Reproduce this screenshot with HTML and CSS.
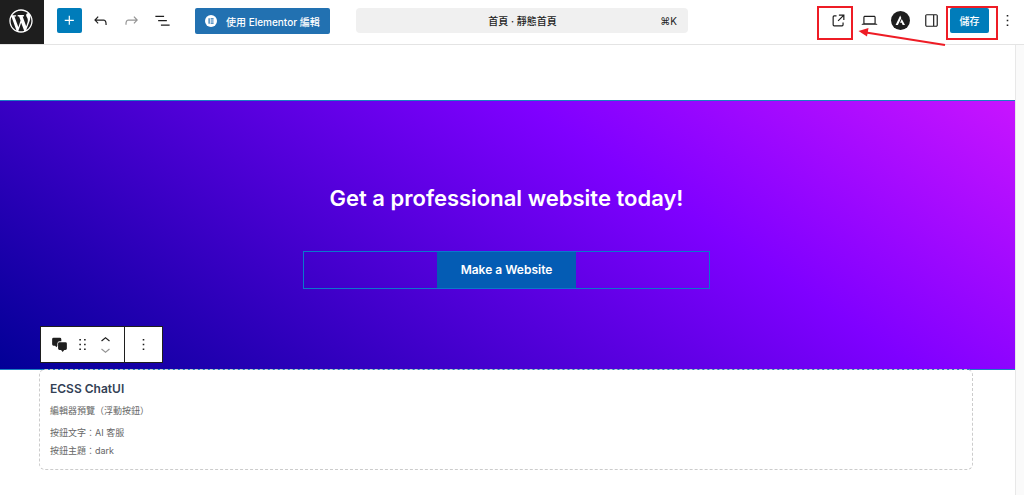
FILE: index.html
```html
<!DOCTYPE html>
<html lang="zh-Hant">
<head>
  <meta charset="utf-8">
  <title>首頁 · 靜態首頁</title>
  <link rel="stylesheet" href="styles.css">
</head>
<body>
  <header class="editor-header">
    <a class="wp-logo" href="#" aria-label="WordPress">
      <svg viewBox="-2 -2 24 24"><path d="M20 10c0-5.51-4.49-10-10-10C4.48 0 0 4.49 0 10c0 5.52 4.48 10 10 10 5.51 0 10-4.48 10-10zM7.78 15.37L4.37 6.22c.55-.02 1.17-.08 1.17-.08.5-.06.44-1.13-.06-1.11 0 0-1.45.11-2.37.11-.18 0-.37 0-.58-.01C4.12 2.69 6.87 1.11 10 1.11c2.33 0 4.45.87 6.05 2.34-.68-.11-1.65.39-1.65 1.58 0 .74.45 1.36.9 2.1.35.61.55 1.36.55 2.46 0 1.49-1.4 5-1.4 5l-3.03-8.37c.54-.02.82-.17.82-.17.5-.05.44-1.25-.06-1.22 0 0-1.44.12-2.38.12-.87 0-2.33-.12-2.33-.12-.5-.03-.56 1.2-.06 1.22l.92.08 1.26 3.41zM17.41 10c.24-.64.74-1.87.43-4.25.7 1.29 1.05 2.71 1.05 4.25 0 3.29-1.73 6.24-4.4 7.78.97-2.59 1.94-5.2 2.92-7.78zM6.1 18.09C3.12 16.65 1.11 13.53 1.11 10c0-1.3.23-2.48.72-3.59C3.25 10.3 4.67 14.2 6.1 18.09zm4.03-6.63l2.58 6.98c-.86.29-1.76.45-2.71.45-.79 0-1.57-.11-2.29-.33.81-2.38 1.62-4.74 2.42-7.1z"/></svg>
    </a>

    <div class="tools">
      <button class="icon-button primary" aria-label="Add block">
        <svg viewBox="0 0 24 24"><path d="M11 12.5V17.5H12.5V12.5H17.5V11H12.5V6H11V11H6V12.5H11Z"/></svg>
      </button>
      <button class="icon-button" aria-label="Undo">
        <svg viewBox="0 0 24 24"><path d="M18.3 11.7c-.6-.6-1.4-.9-2.3-.9H6.7l2.9-3.3-1.1-1-4.5 5L8.5 16l1-1-2.7-2.7H16c.5 0 .9.2 1.3.5 1 1 1 3.4 1 4.5v.3h1.5v-.2c0-1.5 0-4.3-1.5-5.7z"/></svg>
      </button>
      <button class="icon-button" aria-label="Redo" disabled>
        <svg viewBox="0 0 24 24"><path d="M15.6 6.5l-1.1 1 2.9 3.3H8c-.9 0-1.7.3-2.3.9-1.4 1.5-1.4 4.2-1.4 5.6v.2h1.5v-.3c0-1.1 0-3.5 1-4.5.3-.3.7-.5 1.3-.5h9.2L14.5 15l1.1 1.1 4.6-4.6-4.6-5z"/></svg>
      </button>
      <button class="icon-button" aria-label="Document overview">
        <svg viewBox="0 0 24 24"><path d="M3 6h11v1.5H3V6Zm3.5 5.5h11V13h-11v-1.5ZM21 17H10v1.5h11V17Z"/></svg>
      </button>
    </div>

    <button class="elementor-button">
      <svg viewBox="0 0 12 12"><circle cx="6" cy="6" r="6" fill="#fff"/><path d="M3.5 3.3h1.2v5.4H3.5zM5.6 3.3h3v1.1h-3zM5.6 5.4h3v1.1h-3zM5.6 7.6h3v1.1h-3z" fill="#2271b1"/></svg>
      使用 Elementor 編輯
    </button>

    <div class="document-area">
      <button class="document-bar">
        <span class="document-title">首頁 · 靜態首頁</span>
        <span class="shortcut">⌘K</span>
      </button>
    </div>

    <div class="settings">
      <a class="icon-button" href="#" aria-label="View page">
        <svg viewBox="0 0 24 24"><path d="M19.5 4.5h-7V6h4.44l-5.97 5.97 1.06 1.06L18 7.06v4.44h1.5v-7Zm-13 1a2 2 0 0 0-2 2v10a2 2 0 0 0 2 2h10a2 2 0 0 0 2-2v-3H17v3a.5.5 0 0 1-.5.5h-10a.5.5 0 0 1-.5-.5v-10a.5.5 0 0 1 .5-.5h3V5.5h-3Z"/></svg>
      </a>
      <button class="icon-button" aria-label="Preview">
        <svg viewBox="0 0 24 24"><path d="M20.5 16h-.7V8c0-1.1-.9-2-2-2H6.2c-1.1 0-2 .9-2 2v8h-.7c-.8 0-1.5.7-1.5 1.5h20c0-.8-.7-1.5-1.5-1.5zM5.7 8c0-.3.2-.5.5-.5h11.6c.3 0 .5.2.5.5v7.6H5.7V8z"/></svg>
      </button>
      <button class="icon-button" aria-label="Astra settings">
        <svg viewBox="0 0 24 24"><circle cx="12" cy="12" r="12"/><path d="M11.6 5.6 5.8 17.6h2.9l4.3-8.9zM13.6 10.2l-2.2 4.6h2.2l1.1 2.8h3z" fill="#fff"/></svg>
      </button>
      <button class="icon-button" aria-label="Settings">
        <svg viewBox="0 0 24 24"><path d="M18 4H6c-1.1 0-2 .9-2 2v12c0 1.1.9 2 2 2h12c1.1 0 2-.9 2-2V6c0-1.1-.9-2-2-2zm-4 14.5H6c-.3 0-.5-.2-.5-.5V6c0-.3.2-.5.5-.5h8v13zm4.5-.5c0 .3-.2.5-.5.5h-2.5v-13H18c.3 0 .5.2.5.5v12z"/></svg>
      </button>
      <button class="save-button">儲存</button>
      <button class="icon-button" aria-label="Options">
        <svg viewBox="0 0 24 24"><path d="M13 19h-2v-2h2v2zm0-6h-2v-2h2v2zm0-6h-2V5h2v2z"/></svg>
      </button>
    </div>

    <!-- Highlights: save first, then open the page -->
    <svg class="callout" viewBox="0 0 224 60">
      <path d="M18 7h34v32H18zM147 7h50v32h-50z" fill="none" stroke="#ee1c25" stroke-width="2"/>
      <path d="M145 45 66 32.5" stroke="#ee1c25" stroke-width="2"/>
      <path d="M58.5 31 68.500 28l-1.500 8.500z" fill="#ee1c25"/>
    </svg>
  </header>

  <main class="canvas">
    <section class="cover">
      <h2>Get a professional website today!</h2>
      <div class="cover-buttons">
        <a class="cover-button" href="#">Make a Website</a>
      </div>

      <div class="block-toolbar">
        <div class="toolbar-group">
          <button aria-label="ECSS ChatUI">
            <svg viewBox="0 0 24 24"><path d="M4.5 3.5h8a1.8 1.8 0 0 1 1.8 1.8V8h-2a3 3 0 0 0-3 3v3L8 15.5 6.5 13.500h-2a1.8 1.8 0 0 1-1.8-1.8V5.3a1.8 1.8 0 0 1 1.8-1.8z"/><path d="M12 9h7.5a1.8 1.8 0 0 1 1.8 1.8v6.4a1.8 1.8 0 0 1-1.8 1.8H18l-2 2.5-2-2.5h-2a1.8 1.8 0 0 1-1.8-1.8v-6.4A1.8 1.8 0 0 1 12 9z"/></svg>
          </button>
          <button aria-label="Drag">
            <svg viewBox="0 0 24 24"><path d="M8 7h2V5H8v2zm0 6h2v-2H8v2zm0 6h2v-2H8v2zm6-14v2h2V5h-2zm0 8h2v-2h-2v2zm0 6h2v-2h-2v2z"/></svg>
          </button>
          <div class="movers">
            <button aria-label="Move up">
              <svg viewBox="0 3 24 15"><path d="M6.5 12.4L12 8l5.5 4.4-.9 1.2L12 10l-4.5 3.6-1-1.2z"/></svg>
            </button>
            <button aria-label="Move down" disabled>
              <svg viewBox="0 6 24 15"><path d="M17.5 11.6L12 16l-5.5-4.4.9-1.2L12 14l4.5-3.6 1 1.2z"/></svg>
            </button>
          </div>
        </div>
        <div class="toolbar-group">
          <button aria-label="Options">
            <svg viewBox="0 0 24 24"><path d="M13 19h-2v-2h2v2zm0-6h-2v-2h2v2zm0-6h-2V5h2v2z"/></svg>
          </button>
        </div>
      </div>
    </section>

    <section class="chat-preview">
      <h3>ECSS ChatUI</h3>
      <p class="preview-note">編輯器預覽（浮動按鈕）</p>
      <p>按鈕文字：AI 客服</p>
      <p>按鈕主題：dark</p>
    </section>
  </main>
</body>
</html>
```
FILE: styles.css
```css
* {
  box-sizing: border-box;
}
html, body {
  height: 100%;
  margin: 0;
}
body {
  display: flex;
  flex-direction: column;
  background-color: #fff;
  color: #1e1e1e;
  font-family: Inter, "Noto Sans CJK TC", sans-serif;
  font-size: 10px;
  overflow: hidden;
}
button {
  margin: 0;
  padding: 0;
  border: 0;
  background: none;
  color: inherit;
  font: inherit;
}
a {
  color: inherit;
  text-decoration: none;
}
svg {
  display: block;
  fill: currentColor;
}

/* Header */
.editor-header {
  position: relative;
  display: flex;
  align-items: flex-start;
  padding-right: 4px;
  border-bottom: 1px solid #e4e4e4;
}
.wp-logo {
  display: flex;
  align-items: center;
  justify-content: center;
  width: 44px;
  height: 44px;
  padding: 0 2px 2px 0;
  background-color: #1e1e1e;
  color: #fff;
}
.wp-logo svg {
  width: 28px;
  height: 28px;
}
.tools, .settings {
  display: flex;
  gap: 6px;
  padding-top: 8px;
}
.tools {
  padding-left: 13px;
}
.icon-button {
  display: flex;
  align-items: center;
  justify-content: center;
  width: 25px;
  height: 25px;
  border-radius: 2px;
}
.icon-button svg {
  width: 19px;
  height: 19px;
}
.icon-button:disabled {
  color: #949494;
}
.primary, .save-button {
  background-color: #007cba;
  color: #fff;
}
.elementor-button {
  display: flex;
  align-items: center;
  gap: 9px;
  height: 26px;
  margin: 8px 0 0 20px;
  padding: 0 10px;
  border-radius: 2px;
  background-color: #2271b1;
  color: #fff;
  font-weight: 500;
  white-space: nowrap;
}
.elementor-button svg {
  width: 12px;
  height: 12px;
}
.document-area {
  flex: 1;
  padding: 8px 138px 0 26px;
}
.document-bar {
  display: flex;
  align-items: center;
  width: 100%;
  height: 25px;
  padding: 0 11px;
  border-radius: 4px;
  background-color: #f0f0f0;
}
.document-title {
  flex: 1;
  padding-left: 18px;
  font-weight: 500;
}
.save-button {
  width: 39px;
  height: 25px;
  border-radius: 2px;
  font-weight: 500;
}
.callout {
  position: absolute;
  top: 0;
  right: 0;
  width: 224px;
  height: 60px;
  z-index: 2;
  pointer-events: none;
}

/* Canvas */
.canvas {
  flex: 1;
  margin-right: 8px;
  padding-top: 55px;
  border-right: 1px solid #e8e8e8;
  box-shadow: 8px 0 0 #fafafa;
}
.cover {
  position: relative;
  display: flex;
  flex-direction: column;
  align-items: center;
  gap: 38px;
  padding: 82px 26px 80px 24px;
  border-top: 1px solid #1a7fc4;
  border-bottom: 1px solid #1a7fc4;
  background: linear-gradient(34deg, #020096 0%, #7f00ff 65%, #c814ff 100%);
  color: #fff;
}
.cover h2 {
  margin: 0;
  font-size: 22px;
  font-weight: 600;
  line-height: 30px;
}
.cover-buttons {
  display: flex;
  justify-content: center;
  width: 100%;
  max-width: 407px;
  border: 1px solid #0a78cc;
}
.cover-button {
  padding: 8px 24px;
  background-color: #045cb4;
  font-size: 12px;
  font-weight: 600;
  line-height: 20px;
}
.block-toolbar {
  position: absolute;
  bottom: 6px;
  left: 40px;
  display: flex;
  border: 1px solid #1e1e1e;
  background-color: #fff;
  color: #1e1e1e;
}
.toolbar-group {
  display: flex;
  align-items: center;
  gap: 4px;
  height: 35px;
  padding: 0 9px;
}
.toolbar-group + .toolbar-group {
  border-left: 1px solid #1e1e1e;
}
.toolbar-group svg {
  width: 19px;
  height: 19px;
}
.movers svg {
  height: 12px;
}
.movers button {
  display: block;
}
.movers button:disabled {
  color: #949494;
}

/* Chat block preview */
.chat-preview {
  position: relative;
  margin: -1px 42px 0 39px;
  padding: 9px 10px;
  border: 1px dashed #ccc;
  border-radius: 6px;
  color: #666;
}
.chat-preview h3 {
  margin: 0 0 3px;
  color: #334155;
  font-size: 12px;
  font-weight: 600;
  line-height: 20px;
}
.chat-preview p {
  margin: 0;
  font-size: 9px;
  line-height: 18px;
}
.chat-preview .preview-note {
  margin-bottom: 4px;
}
```
